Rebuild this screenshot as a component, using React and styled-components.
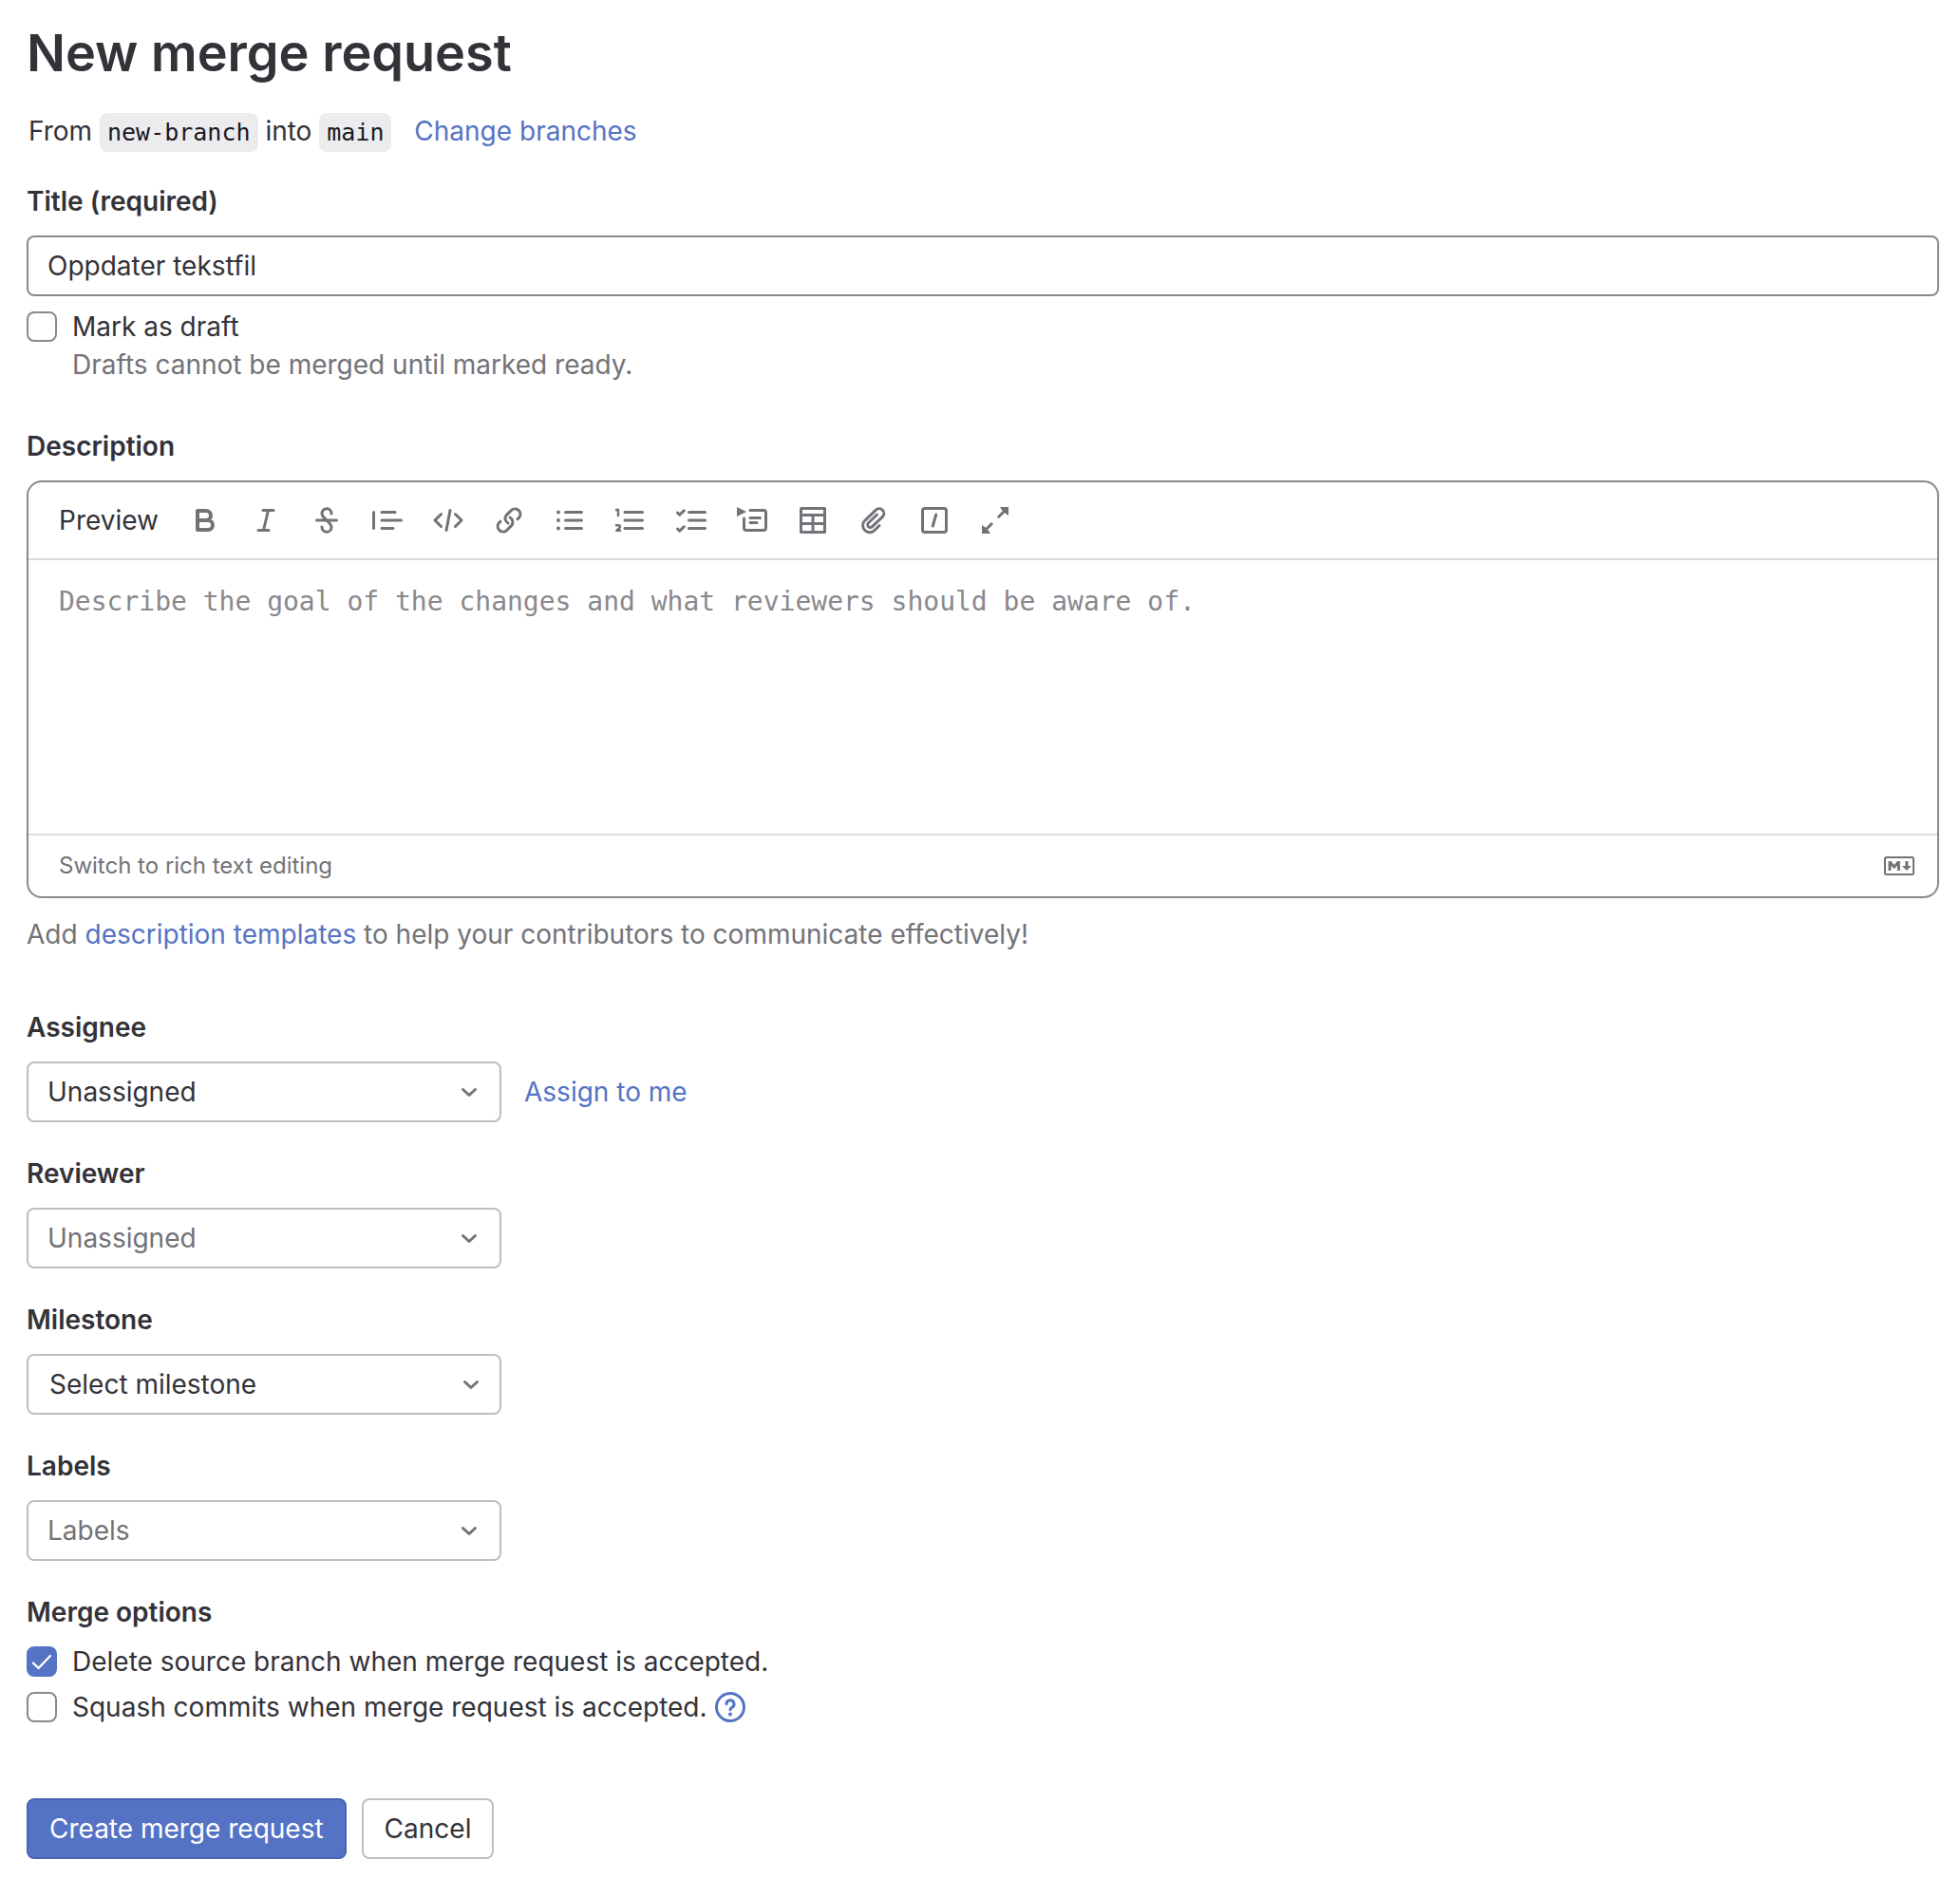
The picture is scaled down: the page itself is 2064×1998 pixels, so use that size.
import React, { useState } from "react";
import styled, { createGlobalStyle } from "styled-components";

const color = {
  text: "#333238",
  strong: "#18171d",
  subtle: "#737278",
  placeholder: "#89888d",
  control: "#89888d",
  dropdown: "#bfbfc3",
  divider: "#dcdcde",
  code: "#ececef",
  accent: "#5573c4",
  accentDark: "#4863b5",
};

const sans = `"Inter", "Liberation Sans", sans-serif`;
const mono = `"DejaVu Sans Mono", "Liberation Mono", monospace`;

const GlobalStyle = createGlobalStyle`
  *, *::before, *::after { box-sizing: border-box; }
  body {
    margin: 0;
    background: #fff;
    color: ${color.text};
    font-family: ${sans};
    font-size: 28px;
    line-height: 40px;
  }
  button, input, select, textarea { font: inherit; color: inherit; }
`;

const Page = styled.main`
  padding: 16px 22px 40px 28px;
`;

const Heading = styled.h1`
  margin: 0 0 22px;
  font-size: 54px;
  font-weight: 600;
  line-height: 80px;
`;

const Branches = styled.p`
  margin: 0 0 32px;
  padding-left: 2px;
`;

const BranchName = styled.code`
  padding: 6px 8px;
  border-radius: 8px;
  background: ${color.code};
  color: ${color.strong};
  font-family: ${mono};
  font-size: 25px;
`;

const Link = styled.a`
  color: ${color.accent};
  text-decoration: none;
  &:hover { text-decoration: underline; }
`;

const BranchLink = styled(Link)`
  margin-left: 16px;
`;

const Label = styled.label`
  display: block;
  margin-bottom: 16px;
  font-weight: 600;
`;

const Field = styled.div`
  margin-bottom: ${(p) => p.$gap || 34}px;
`;

const TitleInput = styled.input`
  display: block;
  width: 100%;
  height: 64px;
  margin-bottom: 12px;
  padding: 0 20px;
  border: 2px solid ${color.control};
  border-radius: 8px;
  background: #fff;
`;

const CheckRow = styled.div`
  display: flex;
  align-items: center;
  gap: 16px;
`;

const CheckList = styled.div`
  display: flex;
  flex-direction: column;
  gap: 8px;
`;

const CheckBox = styled.span`
  display: grid;
  flex: none;
  width: 32px;
  height: 32px;

  > * { grid-area: 1 / 1; }

  input {
    appearance: none;
    width: 32px;
    height: 32px;
    margin: 0;
    border: 2px solid ${color.control};
    border-radius: 8px;
    background: #fff;
  }
  input:checked {
    border-color: ${color.accent};
    background: ${color.accent};
  }
  svg { pointer-events: none; }
`;

const HelpText = styled.p`
  margin: 0;
  padding-left: ${(p) => (p.$indent ? 48 : 0)}px;
  color: ${color.subtle};
`;

const TemplateHint = styled(HelpText)`
  margin-top: 18px;
`;

const HelpLink = styled.a`
  display: flex;
  margin-left: -8px;
  color: ${color.accent};
`;

const Editor = styled.div`
  overflow: hidden;
  border: 2px solid ${color.control};
  border-radius: 16px;
`;

const Toolbar = styled.div`
  display: flex;
  flex-wrap: wrap;
  align-items: center;
  gap: 16px;
  padding: 16px 24px;
  border-bottom: 2px solid ${color.divider};
`;

const PlainButton = styled.button`
  display: flex;
  align-items: center;
  height: 48px;
  padding: 0 8px;
  border: 0;
  border-radius: 8px;
  background: transparent;
  cursor: pointer;
  &:hover { background: ${color.code}; }
`;

const PreviewButton = styled(PlainButton)`
  min-width: 122px;
`;

const ToolButton = styled(PlainButton)`
  color: ${color.subtle};
`;

const SwitchButton = styled(PlainButton)`
  color: ${color.subtle};
  font-size: 24px;
`;

const DescriptionBox = styled.textarea`
  display: block;
  width: 100%;
  height: 288px;
  padding: 24px 32px;
  border: 0;
  outline: 0;
  resize: none;
  font-family: ${mono};
  &::placeholder { color: ${color.placeholder}; opacity: 1; }
`;

const EditorFooter = styled.div`
  display: flex;
  align-items: center;
  justify-content: space-between;
  padding: 8px 24px;
  border-top: 2px solid ${color.divider};
  color: ${color.subtle};
`;

const MarkdownLink = styled.a`
  display: flex;
  color: inherit;
`;

const PickerRow = styled.div`
  display: flex;
  align-items: center;
  gap: 24px;
`;

const SelectWrap = styled.div`
  display: grid;
  align-items: center;
  width: 100%;
  max-width: 500px;

  > * { grid-area: 1 / 1; }
  > svg {
    justify-self: end;
    margin-right: ${(p) => (p.$wide ? 16 : 18)}px;
    color: ${color.subtle};
    pointer-events: none;
  }
`;

const Select = styled.select`
  appearance: none;
  width: 100%;
  height: 64px;
  padding: 0 ${(p) => (p.$wide ? 22 : 20)}px;
  border: 2px solid ${color.dropdown};
  border-radius: 8px;
  background: #fff;
  color: ${(p) => (p.$muted ? color.subtle : color.text)};
`;

const TextButton = styled.button`
  padding: 0;
  border: 0;
  background: none;
  color: ${color.accent};
  cursor: pointer;
`;

const Options = styled.fieldset`
  margin: 0 0 76px;
  padding: 0;
  border: 0;
`;

const Legend = styled.legend`
  margin-bottom: 12px;
  padding: 0;
  font-weight: 600;
`;

const Actions = styled.div`
  display: flex;
  gap: 16px;
`;

const ActionButton = styled.button`
  height: 64px;
  padding: 0 22px;
  border: 2px solid ${(p) => (p.$primary ? color.accentDark : color.dropdown)};
  border-radius: 8px;
  background: ${(p) => (p.$primary ? color.accent : "#fff")};
  color: ${(p) => (p.$primary ? "#fff" : color.text)};
  cursor: pointer;
`;

function Icon({ children, stroke = 3, width = 32, height = 32 }) {
  return (
    <svg
      width={width}
      height={height}
      viewBox={`0 0 ${width} ${height}`}
      fill="none"
      stroke="currentColor"
      strokeWidth={stroke}
      strokeLinecap="round"
      strokeLinejoin="round"
      aria-hidden="true"
    >
      {children}
    </svg>
  );
}

const linkHalf =
  "M25 14.8l1.7-1.7a5.7 5.7 0 0 0-8-8l-5.5 5.5a5.7 5.7 0 0 0 1.8 8.4";

const tools = [
  {
    label: "Bold",
    stroke: 4,
    art: <path d="M8 6h9a5 5 0 0 1 0 10H8zM8 16h11a5 5 0 0 1 0 10H8z" />,
  },
  { label: "Italic", art: <path d="M13 5.5h11M8 26.5h11M18.5 5.5l-5 21" /> },
  {
    label: "Strikethrough",
    art: (
      <path d="M5.5 16h21M21 9a5 5 0 0 0-10-.5c0 3.5 3 5.5 5 7.5s5 4 5 7.5a5 5 0 0 1-10-.5" />
    ),
  },
  {
    label: "Insert a quote",
    art: <path d="M1.5 7.5v17M10 7.5h14M10 16h20.5M10 24.5h12" />,
  },
  {
    label: "Insert code",
    art: <path d="M8.5 9.5L2 16l6.5 6.5M23.5 9.5L30 16l-6.5 6.5M18 5.5l-4 21" />,
  },
  {
    label: "Add a link",
    art: (
      <>
        <path d={linkHalf} />
        <path d={linkHalf} transform="rotate(180 16 16)" />
      </>
    ),
  },
  {
    label: "Add a bullet list",
    art: (
      <>
        <path d="M11.5 7.5h17M11.5 16h17M11.5 24.5h17" />
        <g fill="currentColor" stroke="none">
          <circle cx="4" cy="7.5" r="2" />
          <circle cx="4" cy="16" r="2" />
          <circle cx="4" cy="24.5" r="2" />
        </g>
      </>
    ),
  },
  {
    label: "Add a numbered list",
    art: (
      <>
        <path d="M10 7.5h18.5M10 16h18.5M10 24.5h18.5" />
        <path
          d="M0 5h3v7M0 21.2h3.2c2.4 0 2.4 2.6.6 3.3L1.2 26.8H6"
          strokeWidth="2.4"
          strokeLinecap="butt"
        />
      </>
    ),
  },
  {
    label: "Add a checklist",
    art: (
      <path d="M13.5 7.5h17M13.5 16h17M13.5 24.5h17M1.5 8l2.2 2.2 4.6-4.4M1.5 25l2.2 2.2 4.6-4.4" />
    ),
  },
  {
    label: "Add a collapsible section",
    art: (
      <>
        <path d="M0 2l10 5-10 5z" fill="currentColor" stroke="none" />
        <path d="M14 5.5h14a2.5 2.5 0 0 1 2.5 2.5v16a2.5 2.5 0 0 1-2.5 2.5H10A2.5 2.5 0 0 1 7.5 24V14" />
        <path d="M14 13.5h10.5M14 18.5h7" />
      </>
    ),
  },
  {
    label: "Add a table",
    art: (
      <path d="M3.5 3.5h25v25h-25zM3.5 10.5h25M3.5 19.5h25M16 10.5v18" />
    ),
  },
  {
    label: "Attach a file",
    art: (
      <path d="M22 21.5l-5 5A7.2 7.2 0 0 1 6.7 16.3L18.3 5.2a5 5 0 0 1 7 7.2L14.5 22.7a2.8 2.8 0 0 1-4-4L19.5 10" />
    ),
  },
  {
    label: "Add a quick action",
    art: (
      <>
        <rect x="3.5" y="3.5" width="25" height="25" rx="2.5" />
        <path d="M17.7 10l-3.4 12" />
      </>
    ),
  },
  {
    label: "Go full screen",
    art: (
      <>
        <path d="M19.8 12.2L27 5M12.2 19.8L5 27" />
        <path
          d="M21 2h9v9L27 9 23 5zM2 21v9h9l-2-3-4-4z"
          fill="currentColor"
          stroke="none"
        />
      </>
    ),
  },
];

function Check({ id, label, defaultChecked = false, children }) {
  const [checked, setChecked] = useState(defaultChecked);
  return (
    <CheckRow>
      <CheckBox>
        <input
          id={id}
          type="checkbox"
          checked={checked}
          onChange={(e) => setChecked(e.target.checked)}
        />
        {checked && (
          <Icon stroke={2.4}>
            <path d="M7 17.5l5.5 5.5L25 10" stroke="#fff" />
          </Icon>
        )}
      </CheckBox>
      <label htmlFor={id}>{label}</label>
      {children}
    </CheckRow>
  );
}

function Picker({ id, label, value, muted, wide, children }) {
  return (
    <Field>
      <Label htmlFor={id}>{label}</Label>
      <PickerRow>
        <SelectWrap $wide={wide}>
          <Select id={id} $muted={muted} $wide={wide}>
            <option>{value}</option>
          </Select>
          <Icon>
            <path d="M9.5 13.5l6.5 6 6.5-6" />
          </Icon>
        </SelectWrap>
        {children}
      </PickerRow>
    </Field>
  );
}

export default function App() {
  return (
    <Page>
      <GlobalStyle />
      <Heading>New merge request</Heading>
      <Branches>
        From <BranchName>new-branch</BranchName> into{" "}
        <BranchName>main</BranchName>{" "}
        <BranchLink href="#branches">Change branches</BranchLink>
      </Branches>

      <form onSubmit={(e) => e.preventDefault()}>
        <Field $gap={46}>
          <Label htmlFor="title">Title (required)</Label>
          <TitleInput id="title" type="text" defaultValue="Oppdater tekstfil" />
          <Check id="draft" label="Mark as draft" />
          <HelpText $indent>Drafts cannot be merged until marked ready.</HelpText>
        </Field>

        <Field $gap={58}>
          <Label htmlFor="description">Description</Label>
          <Editor>
            <Toolbar>
              <PreviewButton type="button">Preview</PreviewButton>
              {tools.map((tool) => (
                <ToolButton key={tool.label} type="button" aria-label={tool.label}>
                  <Icon stroke={tool.stroke}>{tool.art}</Icon>
                </ToolButton>
              ))}
            </Toolbar>
            <DescriptionBox
              id="description"
              placeholder="Describe the goal of the changes and what reviewers should be aware of."
            />
            <EditorFooter>
              <SwitchButton type="button">Switch to rich text editing</SwitchButton>
              <MarkdownLink href="#markdown" aria-label="Markdown is supported">
                <Icon stroke={2} height={20}>
                  <rect x="1" y="1" width="30" height="18" rx="1.5" />
                  <path
                    d="M4.5 15V5h3l3.2 4 3.2-4h3v10h-3V9.4l-3.2 3.8-3.2-3.8V15zM22.4 5h3v5h3.4L23.9 15 19 10h3.4z"
                    fill="currentColor"
                    stroke="none"
                  />
                </Icon>
              </MarkdownLink>
            </EditorFooter>
          </Editor>
          <TemplateHint>
            Add <Link href="#templates">description templates</Link> to help your
            contributors to communicate effectively!
          </TemplateHint>
        </Field>

        <Picker id="assignee" label="Assignee" value="Unassigned">
          <TextButton type="button">Assign to me</TextButton>
        </Picker>
        <Picker id="reviewer" label="Reviewer" value="Unassigned" muted />
        <Picker id="milestone" label="Milestone" value="Select milestone" wide />
        <Picker id="labels" label="Labels" value="Labels" muted />

        <Options>
          <Legend>Merge options</Legend>
          <CheckList>
            <Check
              id="delete-source"
              label="Delete source branch when merge request is accepted."
              defaultChecked
            />
            <Check
              id="squash"
              label="Squash commits when merge request is accepted."
            >
              <HelpLink href="#squash-help" aria-label="About squashing commits">
                <Icon>
                  <circle cx="16" cy="16" r="14.5" />
                  <path d="M12 12.8a4 4 0 1 1 5.8 3.5c-1.2.6-1.8 1.2-1.8 2.4" />
                  <circle cx="16" cy="23.5" r="2" fill="currentColor" stroke="none" />
                </Icon>
              </HelpLink>
            </Check>
          </CheckList>
        </Options>

        <Actions>
          <ActionButton type="submit" $primary>
            Create merge request
          </ActionButton>
          <ActionButton type="button">Cancel</ActionButton>
        </Actions>
      </form>
    </Page>
  );
}
